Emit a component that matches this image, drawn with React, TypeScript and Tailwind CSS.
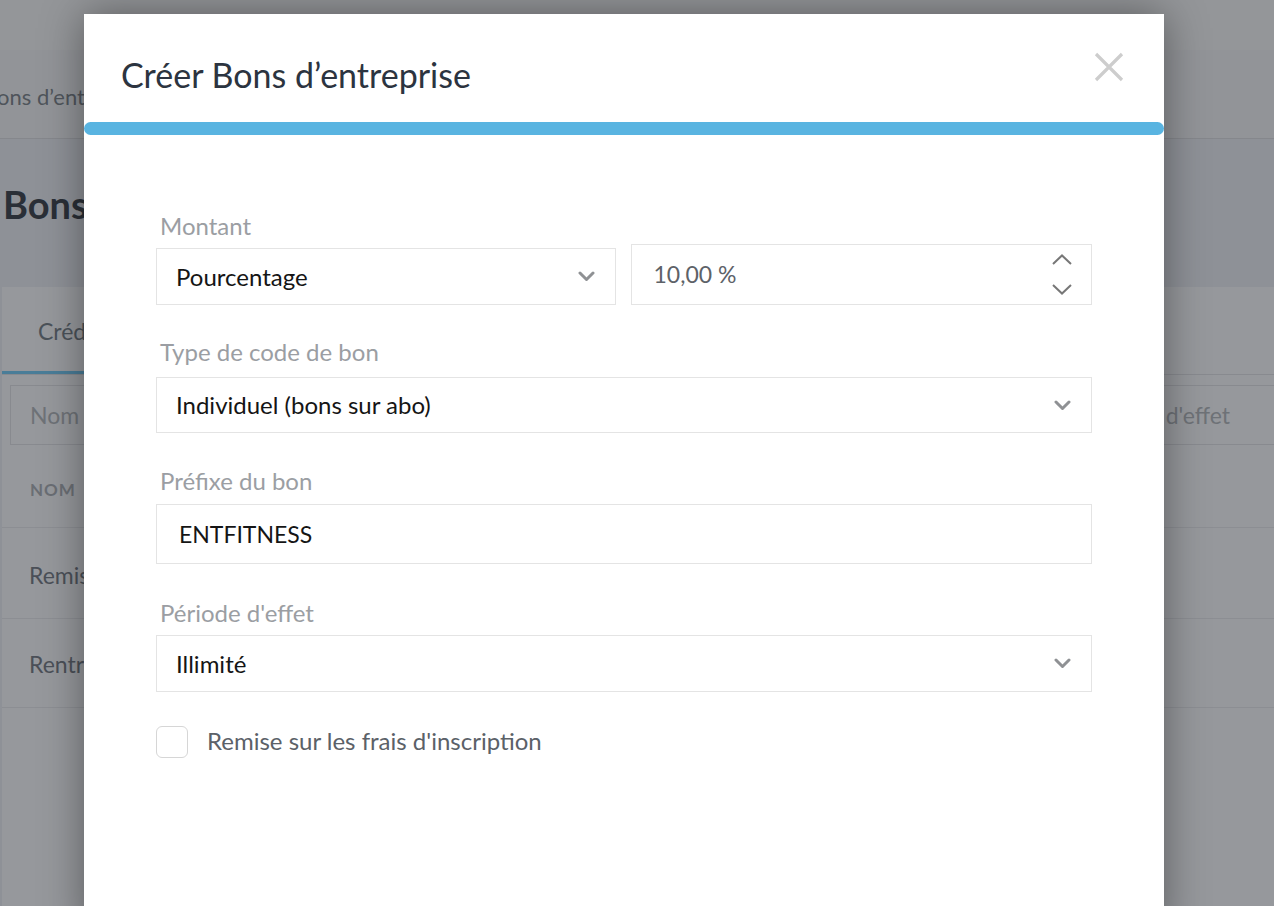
const font = { fontFamily: "Lato, 'Noto Sans', sans-serif" };

const Caret = () => (
  <svg width="17" height="11" viewBox="0 0 17 11" className="shrink-0">
    <path d="M2 2 L8.5 8.5 L15 2" fill="none" stroke="#8f9194" strokeWidth="3" strokeLinecap="round" strokeLinejoin="round" />
  </svg>
);

const Spin = ({ up }: { up?: boolean }) => (
  <svg width="20" height="11" viewBox="0 0 20 11">
    <path d={up ? "M1 10 L10 1.5 L19 10" : "M1 1 L10 9.5 L19 1"} fill="none" stroke="#777777" strokeWidth="2" />
  </svg>
);

const Label = ({ children, className = "" }: { children: React.ReactNode; className?: string }) => (
  <div className={`h-[30px] leading-[30px] text-[24px] text-[#9b9ea3] pl-[4px] ${className}`}>{children}</div>
);

const SelectBox = ({ value, className = "" }: { value: string; className?: string }) => (
  <div className={`border border-[#e4e4e4] flex items-center justify-between pl-[19px] pr-[20px] ${className}`}>
    <span className="text-[24px] text-[#151515]">{value}</span>
    <Caret />
  </div>
);

const PageBehind = () => (
  <div className="w-full h-[906px] overflow-hidden bg-[#8e9197]">
    <div className="h-[50px] bg-[#949699]" />
    <div className="h-[89px] bg-[#929498] border-b border-[#85878c] flex items-center pt-[4px]">
      <span className="-ml-[17px] text-[22px] text-[#4f545b]">Bons d’entreprise</span>
    </div>
    <div className="h-[148px] flex items-center pl-[3px] pb-[18px]">
      <span className="text-[38px] font-bold text-[#2a2f37]">Bons d’entreprise</span>
    </div>
    <div className="bg-[#96989c] ml-[2px] h-[620px]">
      <div className="h-[88px] border-b border-[#888a8f] flex">
        <div className="w-[180px] border-b-[3px] border-[#4a7d98] flex items-center pl-[36px] pt-[4px]">
          <span className="text-[23px] text-[#4b5259]">Crédits</span>
        </div>
      </div>
      <div className="mt-[10px] ml-[8px] h-[60px] border border-[#888a8f] flex items-center justify-between pl-[19px] pr-[63px] -mr-[20px]">
        <span className="text-[23px] text-[#6e7277]">Nom</span>
        <span className="text-[23px] text-[#6e7277]">Période d'effet</span>
      </div>
      <div className="h-[83px] border-b border-[#8c8e93] flex items-center pl-[28px] pt-[8px]">
        <span className="text-[17px] font-bold tracking-[1px] text-[#6a6e74]">NOM</span>
      </div>
      <div className="h-[91px] border-b border-[#8c8e93] flex items-center pl-[27px] pt-[4px]">
        <span className="text-[23px] text-[#4b5058]">Remise entreprise</span>
      </div>
      <div className="h-[89px] border-b border-[#8c8e93] flex items-center pl-[27px] pt-[2px]">
        <span className="text-[23px] text-[#4b5058]">Rentrée fitness</span>
      </div>
    </div>
  </div>
);

export default function App() {
  return (
    <div className="relative w-[1274px] h-[906px] overflow-hidden" style={font}>
      <PageBehind />
      <div className="absolute left-[84px] top-[14px] w-[1080px] h-[920px] bg-white shadow-[0_0_40px_rgba(0,0,0,0.4)]">
        <div className="h-[108px] flex items-start justify-between pl-[37px] pr-[40px]">
          <h1 className="mt-[41px] leading-[40px] text-[34px] text-[#2c3440]">Créer Bons d’entreprise</h1>
          <svg width="30" height="30" viewBox="0 0 30 30" className="mt-[38px]">
            <path d="M2 2 L28 28 M28 2 L2 28" stroke="#cdcdcd" strokeWidth="3.2" />
          </svg>
        </div>
        <div className="h-[13px] rounded-full bg-[#59b4e1]" />
        <div className="px-[72px] pt-[76px]">
          <Label className="mb-[3px]">Montant</Label>
          <div className="flex items-end gap-[15px]">
            <SelectBox value="Pourcentage" className="flex-1 h-[57px]" />
            <div className="flex-1 h-[61px] border border-[#e4e4e4] flex items-center justify-between pl-[22px] pr-[19px]">
              <span className="text-[23px] text-[#5d6268] mb-[1px]">10,00 %</span>
              <div className="flex flex-col items-center gap-[19px]">
                <Spin up />
                <Spin />
              </div>
            </div>
          </div>

          <Label className="mt-[32px] mb-[10px]">Type de code de bon</Label>
          <SelectBox value="Individuel (bons sur abo)" className="h-[56px]" />

          <Label className="mt-[33px] mb-[8px]">Préfixe du bon</Label>
          <div className="h-[60px] border border-[#e4e4e4] flex items-center pl-[22px]">
            <span className="text-[23px] text-[#151515]">ENTFITNESS</span>
          </div>

          <Label className="mt-[34px] mb-[7px]">Période d'effet</Label>
          <SelectBox value="Illimité" className="h-[57px]" />

          <label className="mt-[31px] flex items-center gap-[19px]">
            <span className="w-[32px] h-[32px] rounded-[6px] border border-[#d6d6d6] bg-white" />
            <span className="text-[24px] text-[#5b6168] mb-[2px]">Remise sur les frais d'inscription</span>
          </label>
        </div>
      </div>
    </div>
  );
}
